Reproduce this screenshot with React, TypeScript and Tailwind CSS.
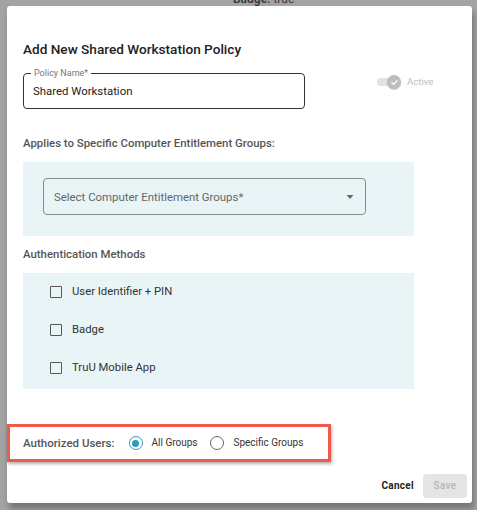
import React from "react";

const font = { fontFamily: "Roboto, 'Noto Sans', sans-serif" };

function Checkbox({ label }: { label: string }) {
  return (
    <div className="flex h-[22px] items-center">
      <div className="ml-[27px] h-[12px] w-[12px] rounded-[1px] border border-[#555] bg-transparent" />
      <span className="ml-[10px] text-[11.3px] leading-[14px] text-[#333]">{label}</span>
    </div>
  );
}

export default function App() {
  return (
    <div className="h-[510px] w-[477px] overflow-hidden bg-[#a3a3a3]" style={font}>
      <div className="flex h-[6px] overflow-hidden">
        <div className="ml-[233px] -mt-[8px] whitespace-nowrap text-[12px] leading-[14px] text-[#3a3a3a]">
          <span className="font-semibold">Badge:</span> true
        </div>
      </div>
      <div className="ml-[7px] h-[497px] w-[465px] rounded-[3px] bg-white shadow-[2px_6px_6px_rgba(0,0,0,0.28)]">
        <div className="flex flex-col px-[16px] pt-[33px]">
          <div className="text-[13.6px] font-medium leading-[20px] text-[#222]">
            Add New Shared Workstation Policy
          </div>
          <div className="mt-[14px] flex items-start">
            <div className="relative flex h-[36px] w-[282px] items-center rounded-[4px] border border-[#333]">
              <span className="absolute -top-[7px] left-[7px] bg-white px-[3px] text-[9px] leading-[12px] text-[#777]">
                Policy Name*
              </span>
              <span className="ml-[9px] text-[11.4px] leading-[16px] text-[#222]">Shared Workstation</span>
            </div>
            <div className="ml-[72px] mt-[2px] flex h-[14px] items-center">
              <div className="relative h-[8px] w-[22px] rounded-full bg-[#e2e2e2]">
                <div className="absolute -top-[3px] left-[10px] flex h-[14px] w-[14px] items-center justify-center rounded-full bg-[#bdbdbd] shadow-[0_1px_1px_rgba(0,0,0,0.2)]">
                  <svg width="9" height="9" viewBox="0 0 24 24" fill="none" stroke="white" strokeWidth="3.5" strokeLinecap="round" strokeLinejoin="round">
                    <path d="M5 12.5l4.5 4.5L19 7" />
                  </svg>
                </div>
              </div>
              <span className="ml-[8px] text-[9.6px] leading-[14px] text-[#bdbdbd]">Active</span>
            </div>
          </div>
          <div className="mt-[26px] text-[11.4px] font-medium leading-[16px] text-[#555]">
            Applies to Specific Computer Entitlement Groups:
          </div>
          <div className="mt-[11px] h-[74px] w-[391px] bg-[#e8f4f6] pl-[20px] pt-[16px]">
            <div className="flex h-[37px] w-[323px] items-center justify-between rounded-[4px] border border-[#8a8a8a] pl-[10px] pr-[10px]">
              <span className="text-[11.4px] leading-[16px] text-[#666]">Select Computer Entitlement Groups*</span>
              <svg width="8" height="4" viewBox="0 0 8 4" className="mr-[1px]">
                <path d="M0.5 0 L7.5 0 L4 4 Z" fill="#666" />
              </svg>
            </div>
          </div>
          <div className="mt-[10px] text-[11.4px] font-medium leading-[16px] text-[#555]">
            Authentication Methods
          </div>
          <div className="mt-[11px] flex h-[116px] w-[391px] flex-col gap-[16px] bg-[#e8f4f6] pt-[8px]">
            <Checkbox label="User Identifier + PIN" />
            <Checkbox label="Badge" />
            <Checkbox label="TruU Mobile App" />
          </div>
          <div className="-ml-[16px] mt-[35px] flex h-[38px] w-[324px] items-center border-[3px] border-[#f05a4b] pl-[13px] shadow-[1px_2px_3px_rgba(0,0,0,0.3)]">
            <span className="text-[11.5px] font-medium leading-[16px] text-[#555]">Authorized Users:</span>
            <div className="ml-[14px] flex h-[14px] w-[14px] items-center justify-center rounded-full border-[1.5px] border-[#2a9dbf]">
              <div className="h-[7px] w-[7px] rounded-full bg-[#2a9dbf]" />
            </div>
            <span className="ml-[9px] text-[10px] leading-[14px] text-[#333]">All Groups</span>
            <div className="ml-[13px] h-[14px] w-[14px] rounded-full border-[1.5px] border-[#666]" />
            <span className="ml-[9px] text-[10px] leading-[14px] text-[#333]">Specific Groups</span>
          </div>
          <div className="-mr-[11px] mt-[12px] flex items-center justify-end">
            <span className="text-[10px] font-bold leading-[14px] tracking-[0.3px] text-[#222]">Cancel</span>
            <div className="ml-[9px] flex h-[24px] w-[44px] items-center justify-center rounded-[4px] bg-[#e5e5e5]">
              <span className="text-[10px] font-medium leading-[14px] tracking-[0.3px] text-[#b5b5b5]">Save</span>
            </div>
          </div>
        </div>
      </div>
    </div>
  );
}
